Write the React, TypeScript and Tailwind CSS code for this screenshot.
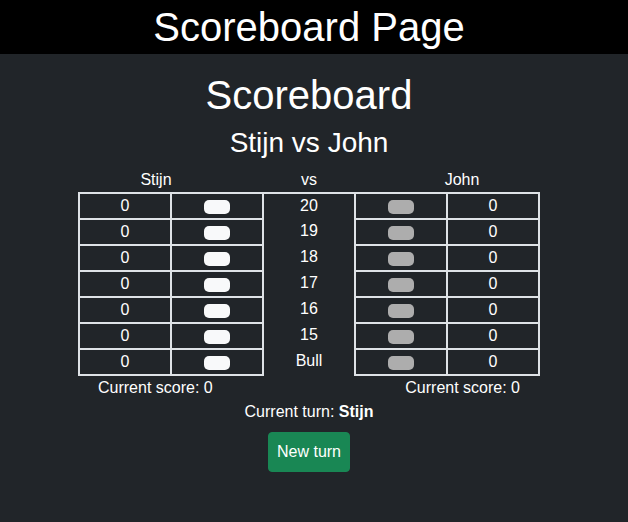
import React, { useState } from 'react';

const targets = ['20', '19', '18', '17', '16', '15', 'Bull'];

function Toggle({ on }: { on: boolean }) {
  return (
    <span
      className={`inline-block w-[26px] h-[14px] rounded-[5px] align-middle ${
        on ? 'bg-[#f8f9fa]' : 'bg-[#adadad]'
      }`}
    />
  );
}

export default function App() {
  const [turn] = useState('Stijn');
  const left = targets.map(() => 0);
  const right = targets.map(() => 0);

  return (
    <div className="min-h-[522px] bg-[#212529] text-white font-['Liberation_Sans',Arial,sans-serif]">
      <header className="bg-black h-[54px] flex items-center justify-center pr-[10px]">
        <h1 className="text-[40px] leading-none">Scoreboard Page</h1>
      </header>

      <main className="flex flex-col items-center pr-[10px] pt-[17px]">
        <h1 className="text-[40px] leading-[48px]">Scoreboard</h1>
        <h2 className="text-[28px] leading-[34px] mt-[7px]">Stijn vs John</h2>

        <table className="mt-[8px] w-[460px] border-collapse table-fixed text-base">
          <thead>
            <tr className="h-[25px] border-b-2 border-[#dee2e6]">
              <th colSpan={2} className="font-normal leading-6 w-[184px] pr-[30px]">Stijn</th>
              <th className="font-normal leading-6 w-[92px]">vs</th>
              <th colSpan={2} className="font-normal leading-6 w-[184px] pl-[30px]">John</th>
            </tr>
          </thead>
          <tbody>
            {targets.map((t, i) => (
              <tr key={t} className="h-[26px]">
                <td className="border-2 border-[#dee2e6] text-center leading-6 p-0">{left[i]}</td>
                <td className="border-2 border-[#dee2e6] text-center leading-none p-0">
                  <Toggle on={true} />
                </td>
                <td className="text-center leading-6 p-0 align-top">{t}</td>
                <td className="border-2 border-[#dee2e6] text-center leading-none p-0">
                  <Toggle on={false} />
                </td>
                <td className="border-2 border-[#dee2e6] text-center leading-6 p-0">{right[i]}</td>
              </tr>
            ))}
          </tbody>
        </table>

        <div className="w-[460px] flex justify-between px-[19px] leading-6">
          <span>Current score: 0</span>
          <span>Current score: 0</span>
        </div>

        <p className="leading-6">
          Current turn: <b className="font-bold">{turn}</b>
        </p>

        <button className="mt-[8px] bg-[#198754] border border-[#198754] rounded-[4px] px-[8px] py-[7px] leading-6 text-white">
          New turn
        </button>
      </main>
    </div>
  );
}
